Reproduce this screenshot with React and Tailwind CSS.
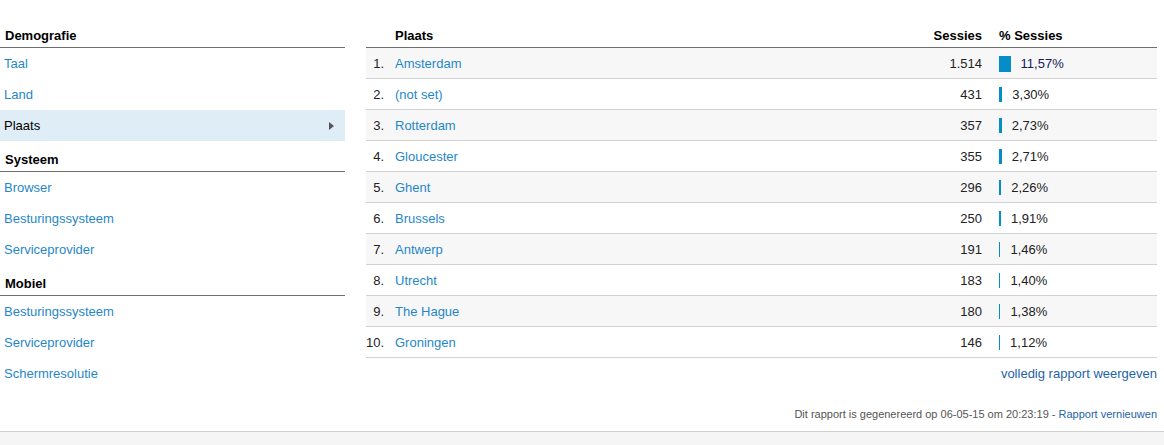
import React from "react";

const sections = [
  {
    title: "Demografie",
    items: [{ label: "Taal" }, { label: "Land" }, { label: "Plaats", active: true }],
  },
  {
    title: "Systeem",
    items: [{ label: "Browser" }, { label: "Besturingssysteem" }, { label: "Serviceprovider" }],
  },
  {
    title: "Mobiel",
    items: [{ label: "Besturingssysteem" }, { label: "Serviceprovider" }, { label: "Schermresolutie" }],
  },
];

const rows = [
  ["Amsterdam", "1.514", 11.57],
  ["(not set)", "431", 3.3],
  ["Rotterdam", "357", 2.73],
  ["Gloucester", "355", 2.71],
  ["Ghent", "296", 2.26],
  ["Brussels", "250", 1.91],
  ["Antwerp", "191", 1.46],
  ["Utrecht", "183", 1.4],
  ["The Hague", "180", 1.38],
  ["Groningen", "146", 1.12],
];

const fmt = (n) => n.toFixed(2).replace(".", ",") + "%";

const Sidebar = () => (
  <div className="w-[345px] shrink-0">
    {sections.map((s) => (
      <div key={s.title}>
        <div className="h-[31px] pt-[11px] pl-[5px] leading-[16px] font-bold text-black border-b border-[#6e6e6e]">
          {s.title}
        </div>
        {s.items.map((it) => (
          <div
            key={it.label}
            className={
              it.active
                ? "h-[31px] flex items-center justify-between pl-[4px] pr-[11px] bg-[#deedf6] text-black"
                : "h-[31px] flex items-center pl-[4px] text-[#1f87c9]"
            }
          >
            <span>{it.label}</span>
            {it.active && (
              <svg width="5" height="8" viewBox="0 0 5 8">
                <path d="M0 0 L5 4 L0 8 Z" fill="#555" />
              </svg>
            )}
          </div>
        ))}
      </div>
    ))}
  </div>
);

const Table = () => (
  <div className="flex-1 ml-[21px] mr-[7px]">
    <div className="h-[31px] pt-[11px] leading-[16px] font-bold text-black flex border-b border-[#6e6e6e]">
      <div className="w-[29px]" />
      <div className="flex-1">Plaats</div>
      <div className="w-[80px] text-right">Sessies</div>
      <div className="w-[158px] ml-[17px]">% Sessies</div>
    </div>
    {rows.map(([city, sess, pct], i) => (
      <div
        key={city}
        className={
          "h-[31px] pt-[1px] flex items-center border-b border-[#d2d2d2] " +
          (i % 2 === 0 ? "bg-[#f7f7f7]" : "bg-white")
        }
      >
        <div className="w-[18px] text-right text-[#222]">{i + 1}.</div>
        <div className="flex-1 pl-[11px] text-[#1f87c9]">{city}</div>
        <div className="w-[80px] text-right text-[#222]">{sess}</div>
        <div className="w-[158px] ml-[17px] flex items-center">
          <div
            className={i === 0 ? "h-[16px] bg-[#058dc7]" : "h-[15px] bg-[#058dc7]"}
            style={{ width: Math.max(1, pct) + "px" }}
          />
          <span className={i === 0 ? "ml-[10px] text-[#14205a]" : "ml-[10px] text-[#222]"}>
            {fmt(pct)}
          </span>
        </div>
      </div>
    ))}
    <div className="h-[31px] flex items-center justify-end text-[#1d63a6]">
      volledig rapport weergeven
    </div>
  </div>
);

export default function App() {
  return (
    <div
      className="h-screen flex flex-col bg-white text-[13px]"
      style={{ fontFamily: '"Liberation Sans", Arial, sans-serif' }}
    >
      <div className="flex pt-[17px]">
        <Sidebar />
        <Table />
      </div>
      <div className="pt-[18px] pb-[10px] pr-[7px] text-right text-[11px] leading-[14px] text-[#555] border-b border-[#d0d0d0]">
        Dit rapport is gegenereerd op 06-05-15 om 20:23:19 -{" "}
        <span className="text-[#1d63a6]">Rapport vernieuwen</span>
      </div>
      <div className="flex-1 bg-[#f5f5f5]" />
    </div>
  );
}
